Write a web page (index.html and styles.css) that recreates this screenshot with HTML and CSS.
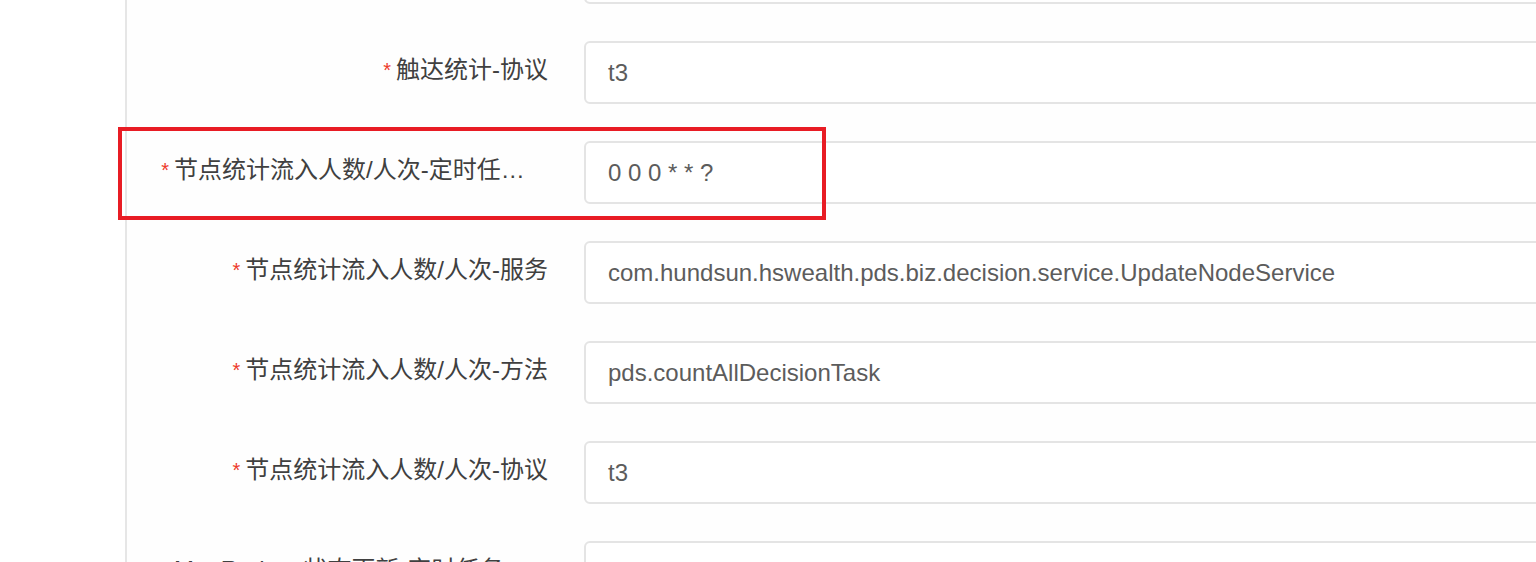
FILE: index.html
```html
<!DOCTYPE html>
<html lang="zh-CN">
<head>
<meta charset="utf-8">
<title>配置</title>
<link rel="stylesheet" href="styles.css">
</head>
<body>
<div class="page">
  <div class="gutter"></div>
  <div class="panel">
    <form class="form">
      <div class="row">
        <label class="label"><span class="star">*</span><span class="text">触达统计-方法</span></label>
        <div class="control">pds.countAllTouchTask</div>
      </div>
      <div class="row">
        <label class="label"><span class="star">*</span><span class="text">触达统计-协议</span></label>
        <div class="control">t3</div>
      </div>
      <div class="row highlighted">
        <label class="label"><span class="star">*</span><span class="text">节点统计流入人数/人次-定时任务表达式</span></label>
        <div class="control">0 0 0 * * ?</div>
        <div class="mark"></div>
      </div>
      <div class="row">
        <label class="label"><span class="star">*</span><span class="text">节点统计流入人数/人次-服务</span></label>
        <div class="control">com.hundsun.hswealth.pds.biz.decision.service.UpdateNodeService</div>
      </div>
      <div class="row">
        <label class="label"><span class="star">*</span><span class="text">节点统计流入人数/人次-方法</span></label>
        <div class="control">pds.countAllDecisionTask</div>
      </div>
      <div class="row">
        <label class="label"><span class="star">*</span><span class="text">节点统计流入人数/人次-协议</span></label>
        <div class="control">t3</div>
      </div>
      <div class="row">
        <label class="label"><span class="star">*</span><span class="text">MapReduce状态更新-定时任务表达式</span></label>
        <div class="control">0 0/5 * * * ?</div>
      </div>
    </form>
  </div>
</div>
</body>
</html>
```

FILE: styles.css
```css
html, body {
  margin: 0;
  padding: 0;
  background: #ffffff;
  height: 562px;
  overflow: hidden;
}

body {
  font-family: "Liberation Sans", "Noto Sans CJK SC", sans-serif;
  font-size: 24px;
}

.page {
  display: flex;
  height: 562px;
  overflow: hidden;
}

.gutter {
  width: 125px;
  flex: none;
}

.panel {
  flex: 1;
  min-width: 0;
  border-left: 2px solid #e6e6e6;
  background: #fefefe;
}

.form {
  margin: -59px 0 0 0;
  display: flex;
  flex-direction: column;
  gap: 37px;
}

.row {
  position: relative;
  display: flex;
  align-items: center;
  gap: 36px;
  height: 63px;
}

.label {
  width: 421px;
  flex: none;
  box-sizing: border-box;
  padding-bottom: 6px;
  display: flex;
  justify-content: flex-end;
  align-items: center;
  color: #404040;
  line-height: 30px;
  white-space: nowrap;
}

.star {
  color: #ed3a2a;
  font-size: 20px;
  margin-right: 5px;
  line-height: 30px;
  align-self: flex-start;
}

.text {
  max-width: 374px;
  overflow: hidden;
  text-overflow: ellipsis;
  white-space: nowrap;
}

.control {
  flex: none;
  box-sizing: border-box;
  width: 1100px;
  height: 63px;
  border: 2px solid #e4e4e4;
  border-radius: 6px;
  background: #ffffff;
  padding: 0 22px;
  display: flex;
  align-items: center;
  color: #5c5c5c;
  white-space: pre;
}

.mark {
  position: absolute;
  left: -9px;
  top: -14px;
  width: 708px;
  height: 93px;
  box-sizing: border-box;
  border: 4px solid #e81c24;
  pointer-events: none;
}
```
